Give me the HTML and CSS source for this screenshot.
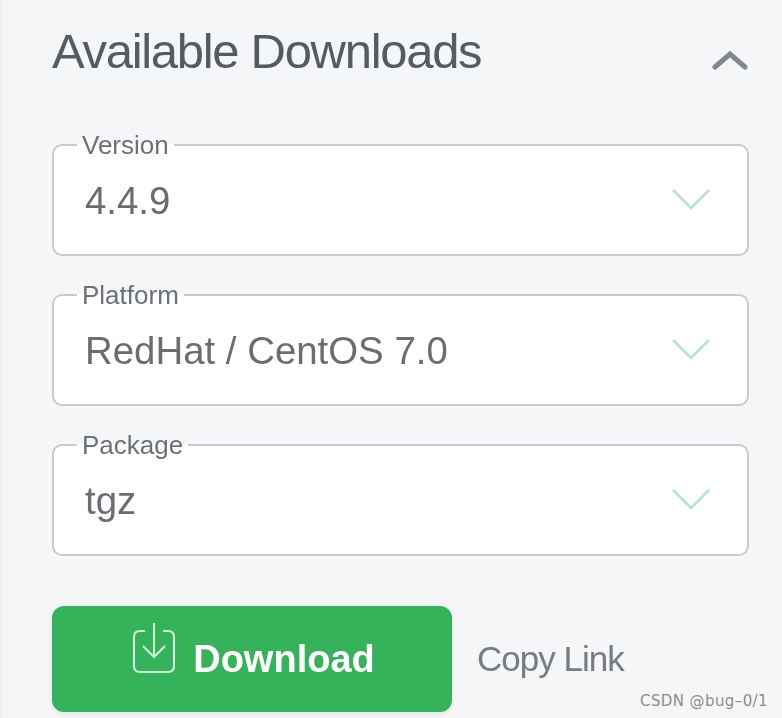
FILE: index.html
```html
<!DOCTYPE html>
<html lang="en">
<head>
  <meta charset="UTF-8" />
  <title>Available Downloads</title>
  <link rel="stylesheet" href="styles.css">
</head>
<body>
  <div class="panel">
    <div class="panel-head">
      <h2>Available Downloads</h2>
      <svg class="caret-up" width="36" height="20" viewBox="0 0 36 20"><path d="M3 17 L18 4 L33 17" /></svg>
    </div>

    <fieldset class="field">
      <legend>Version</legend>
      <span class="value">4.4.9</span>
      <svg class="caret" width="38" height="24" viewBox="0 0 38 24"><path d="M1 2 L19 20 L37 2" /></svg>
    </fieldset>

    <fieldset class="field">
      <legend>Platform</legend>
      <span class="value">RedHat / CentOS 7.0</span>
      <svg class="caret" width="38" height="24" viewBox="0 0 38 24"><path d="M1 2 L19 20 L37 2" /></svg>
    </fieldset>

    <fieldset class="field">
      <legend>Package</legend>
      <span class="value">tgz</span>
      <svg class="caret" width="38" height="24" viewBox="0 0 38 24"><path d="M1 2 L19 20 L37 2" /></svg>
    </fieldset>

    <div class="actions">
      <button class="btn-download">
        <svg class="icon-dl" width="44" height="52" viewBox="0 0 44 52">
          <path d="M13 9 H8 Q2 9 2 15 V44 Q2 50 8 50 H36 Q42 50 42 44 V15 Q42 9 36 9 H31" />
          <path d="M22 1 V35 M11 24 L22 35 L33 24" />
        </svg>
        Download
      </button>
      <a class="copy-link">Copy Link</a>
    </div>
  </div>
  <div class="watermark">CSDN @bug–0/1</div>
</body>
</html>
```

FILE: styles.css
```css
html, body {
  margin: 0;
  height: 100%;
}
body {
  font-family: "Liberation Sans", Arial, sans-serif;
  background: #f5f6f8;
  border-left: 2px solid #eceeef;
  box-sizing: border-box;
  overflow: hidden;
  position: relative;
}
.panel {
  width: 697px;
  margin-left: 50px;
  padding-top: 22px;
  filter: blur(0.7px);
}
.panel-head {
  display: flex;
  justify-content: space-between;
  align-items: center;
  height: 58px;
  margin-bottom: 52px;
}
.panel-head h2 {
  margin: 0;
  font-size: 49px;
  font-weight: normal;
  letter-spacing: -1.3px;
  color: #555b62;
}
.caret-up {
  margin: 18px 1px 0 0;
}
.caret-up path {
  fill: none;
  stroke: #80868b;
  stroke-width: 5;
  stroke-linecap: round;
}
.field {
  display: flex;
  justify-content: space-between;
  align-items: center;
  box-sizing: border-box;
  height: 124px;
  margin: 0 0 26px;
  padding: 0 37px 0 31px;
  background: #fff;
  border: 2px solid #c6cbd2;
  border-radius: 10px;
}
.field legend {
  padding: 0 5px;
  margin-left: -8px;
  font-size: 26px;
  line-height: 26px;
  color: #6b7177;
}
.value {
  font-size: 38.4px;
  color: #686e74;
  margin-top: -10px;
}
.caret {
  margin-top: -12px;
}
.caret path {
  fill: none;
  stroke: #b4e5c6;
  stroke-width: 2.5;
}
.actions {
  display: flex;
  align-items: center;
  gap: 25px;
  margin-top: 50px;
}
.btn-download {
  display: flex;
  align-items: center;
  justify-content: center;
  gap: 17px;
  width: 400px;
  height: 106px;
  padding: 0 0 0 3px;
  border: 0;
  border-radius: 12px;
  background: #34b35a;
  color: #fff;
  font-family: inherit;
  font-size: 38px;
  font-weight: bold;
  box-shadow: 0 2px 6px rgba(0,0,0,0.08);
}
.icon-dl {
  margin-top: -22px;
}
.icon-dl path {
  fill: none;
  stroke: #d5f0de;
  stroke-width: 2;
}
.copy-link {
  font-size: 35px;
  letter-spacing: -1px;
  color: #777c82;
}
.watermark {
  position: absolute;
  right: 14px;
  bottom: 8px;
  font-family: "DejaVu Sans", sans-serif;
  font-size: 15px;
  letter-spacing: 0.4px;
  color: #8c8c8c;
}
```
